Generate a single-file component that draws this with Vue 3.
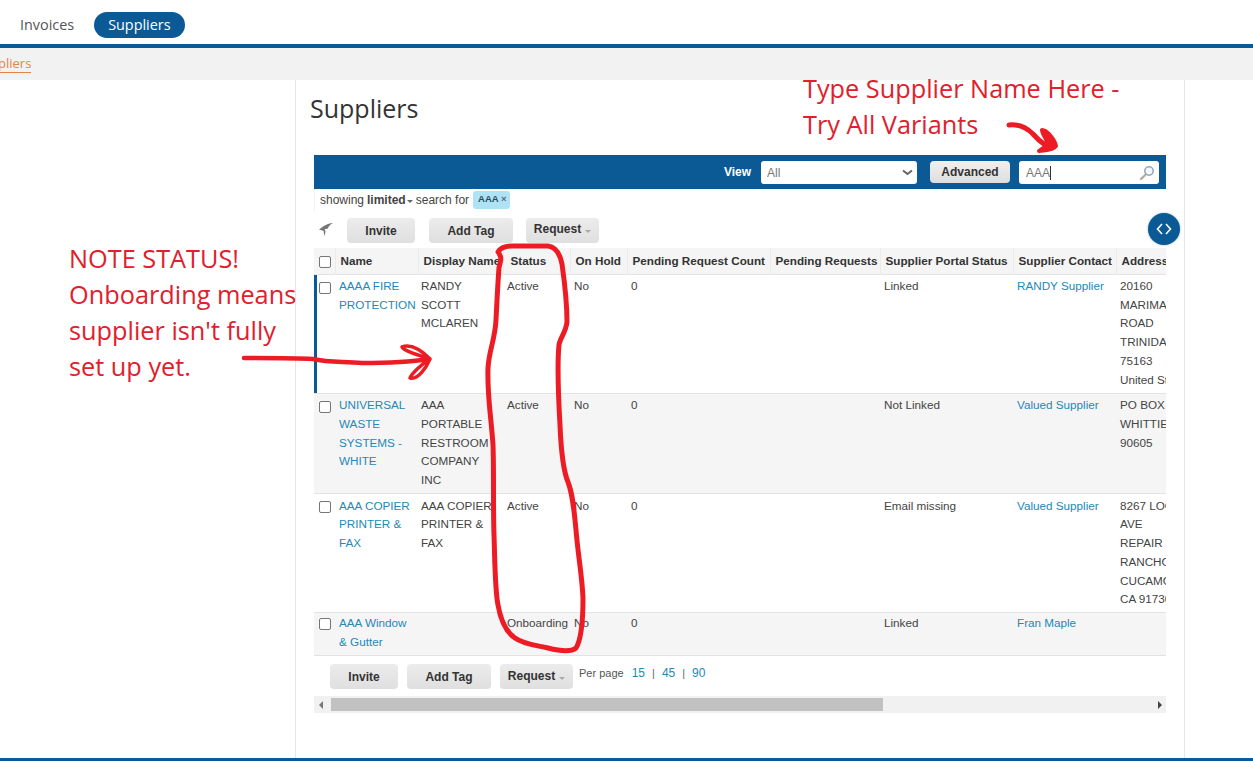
<script setup>
const columns = [
  { label: 'Name', w: 83 },
  { label: 'Display Name', w: 85 },
  { label: 'Status', w: 67 },
  { label: 'On Hold', w: 57 },
  { label: 'Pending Request Count', w: 143 },
  { label: 'Pending Requests', w: 110 },
  { label: 'Supplier Portal Status', w: 133 },
  { label: 'Supplier Contact', w: 103 },
  { label: 'Address', w: 120 }
]
const rows = [
  { name: 'AAAA FIRE\nPROTECTION', display: 'RANDY\nSCOTT\nMCLAREN', status: 'Active', portal: 'Linked', contact: 'RANDY Supplier', address: '20160\nMARIMAR\nROAD\nTRINIDAD\n75163\nUnited States', active: true },
  { name: 'UNIVERSAL\nWASTE\nSYSTEMS -\nWHITE', display: 'AAA\nPORTABLE\nRESTROOM\nCOMPANY\nINC', status: 'Active', portal: 'Not Linked', contact: 'Valued Supplier', address: 'PO BOX 1\nWHITTIER\n90605' },
  { name: 'AAA COPIER\nPRINTER &\nFAX', display: 'AAA COPIER\nPRINTER &\nFAX', status: 'Active', portal: 'Email missing', contact: 'Valued Supplier', address: '8267 LOOP\nAVE\nREPAIR\nRANCHO\nCUCAMONGA\nCA 91730' },
  { name: 'AAA Window\n& Gutter', display: '', status: 'Onboarding', portal: 'Linked', contact: 'Fran Maple', address: '' }
]
</script>

<template>
  <div class="page">
    <nav class="tabs">
      <a class="tab">Invoices</a>
      <a class="tab current">Suppliers</a>
    </nav>
    <div class="crumbs"><a class="crumb">Suppliers</a></div>

    <main class="column">
      <h1 class="title">Suppliers</h1>

      <div class="toolbar">
        <b class="view-label">View</b>
        <div class="select">
          <span>All</span>
          <svg width="11" height="7" viewBox="0 0 11 7"><path d="M1 1.500 5.500 5 10 1.500" fill="none" stroke="#666" stroke-width="2"/></svg>
        </div>
        <button class="advanced">Advanced</button>
        <div class="search">
          <span class="typed">AAA</span>
          <svg width="16" height="16" viewBox="0 0 16 16"><circle cx="10" cy="6" r="4.200" fill="#f4f8fb" stroke="#8da6bb" stroke-width="1.500"/><path d="M7 9.200 2 14" stroke="#b3ab97" stroke-width="2.200" stroke-linecap="round"/></svg>
        </div>
      </div>

      <div class="filters">
        <span>showing</span>
        <b>limited</b><i class="caret"></i>
        <span>search for</span>
        <span class="chip">AAA <em>×</em></span>
      </div>

      <div class="actions">
        <svg class="share" width="14" height="13" viewBox="0 0 14 13"><path d="M14 0C11 1.500 9.500 3.500 8.800 5.500L5.500 6.200 6.500 8C6.200 9.500 6 11 6 13 5 11.500 4.500 9.500 4.800 8L0 6.500 4.800 3C7 1.500 11 .2 14 0Z" fill="#757575"/></svg>
        <button class="btn invite">Invite</button>
        <button class="btn tag">Add Tag</button>
        <button class="btn request">Request<i class="caret light"></i></button>
      </div>

      <div class="grid-wrap">
        <table class="grid">
          <colgroup>
            <col class="check-col" />
            <col v-for="c in columns" :key="c.label" :style="{ width: c.w + 'px' }" />
          </colgroup>
          <thead>
            <tr>
              <th class="check"><input type="checkbox" /></th>
              <th v-for="c in columns" :key="c.label">{{ c.label }}</th>
            </tr>
          </thead>
          <tbody>
            <tr v-for="r in rows" :key="r.name" :class="{ active: r.active }">
              <td class="check"><input type="checkbox" /></td>
              <td><a class="link">{{ r.name }}</a></td>
              <td>{{ r.display }}</td>
              <td>{{ r.status }}</td>
              <td>No</td>
              <td>0</td>
              <td></td>
              <td>{{ r.portal }}</td>
              <td><a class="link">{{ r.contact }}</a></td>
              <td>{{ r.address }}</td>
            </tr>
          </tbody>
        </table>
      </div>

      <div class="actions bottom">
        <button class="btn invite">Invite</button>
        <button class="btn tag">Add Tag</button>
        <button class="btn request">Request<i class="caret light"></i></button>
        <div class="per-page">
          <span>Per page</span>
          <a class="link">15</a><span class="sep">|</span><a class="link">45</a><span class="sep">|</span><a class="link">90</a>
        </div>
      </div>

      <div class="scrollbar">
        <i class="arrow left"></i>
        <div class="track"><div class="thumb"></div></div>
        <i class="arrow right"></i>
      </div>
    </main>

    <footer class="foot"></footer>

    <button class="float" aria-label="Toggle width">
      <svg width="16" height="12" viewBox="0 0 16 12"><path d="M6 1 1.500 6 6 11M10 1l4.500 5L10 11" fill="none" stroke="#fff" stroke-width="1.600"/></svg>
    </button>

    <div class="note note-top">Type Supplier Name Here -<br />Try All Variants</div>
    <div class="note note-left">NOTE STATUS!<br />Onboarding means<br />supplier isn't fully<br />set up yet.</div>

    <svg class="ink" width="1253" height="770" viewBox="0 0 1253 770">
      <g fill="none" stroke="#ed1c24" stroke-linecap="round" stroke-linejoin="round">
        <path stroke-width="5" d="M498 252C501 247 506 246 512 246L548 246C556 247 560 254 562 264C565 285 567 305 567 322C566 332 560 338 559 345C557 365 558 390 560 425C561 450 563 470 568 482C573 495 574 510 576 530C578 555 582 575 583 598C583 620 581 640 576 648C571 652 560 651 548 648C535 645 523 644 515 638C506 632 501 622 498 605C495 590 495 565 494 535C493 505 494 470 493 445C491 415 487 395 488 368C489 350 495 340 496 320C497 300 498 280 499 268C500 262 503 258 498 252Z"/>
        <path stroke-width="4.500" d="M244 358C270 358 295 358 313 359C330 363 345 361 362 363C385 363 410 362 429 359"/>
        <path stroke-width="3.500" d="M430 359C420 349 410 344 402 347C404 351 418 355 430 359C422 364 412 373 410 378C418 380 426 368 430 359Z"/>
        <path stroke-width="5" d="M1009 125C1018 124 1026 127 1033 134C1040 142 1047 147 1053 147"/>
        <path stroke-width="4" fill="#ed1c24" d="M1042 130C1047 130 1055 140 1056 146C1052 151 1045 150 1039 151C1044 147 1048 146 1047 142C1046 138 1042 134 1042 130Z"/>
      </g>
    </svg>
  </div>
</template>

<style scoped>
.page {
  position: relative;
  width: 1253px;
  height: 770px;
  overflow: hidden;
  background: #fff;
  font-family: "Liberation Sans", Arial, sans-serif;
  font-size: 12px;
  color: #333;
}
.tabs {
  height: 44px;
  box-sizing: border-box;
  display: flex;
  align-items: flex-start;
  padding: 12px 0 0 6px;
  gap: 6px;
  font-family: "Open Sans", sans-serif;
  font-size: 14.400px;
}
.tab {
  height: 26px;
  line-height: 26px;
  padding: 0 14px;
  border-radius: 13px;
  color: #555;
}
.tab.current {
  background: #0b5a96;
  color: #fff;
}
.crumbs {
  box-sizing: border-box;
  border-top: 4px solid #0b5a96;
  height: 36px;
  background: #f2f2f2;
  overflow: hidden;
  font-family: "Open Sans", sans-serif;
  font-size: 13px;
  padding-top: 6px;
}
.crumb {
  display: inline-block;
  margin-left: -25px;
  color: #e5824a;
  line-height: 18px;
  border-bottom: 1px solid #e5824a;
}
.column {
  margin-left: 295px;
  width: 890px;
  height: 678px;
  box-sizing: border-box;
  border-left: 1px solid #e6e6e6;
  border-right: 1px solid #e6e6e6;
  padding: 13px 0 0 18px;
}
.title {
  margin: 0 0 32px -4px;
  font-family: "Open Sans", sans-serif;
  font-size: 25px;
  line-height: 30px;
  font-weight: 400;
  color: #333;
}
.toolbar {
  width: 852px;
  height: 34px;
  background: #0b5a96;
  display: flex;
  align-items: center;
  box-sizing: border-box;
  padding-left: 410px;
}
.view-label {
  color: #fff;
  font-size: 12px;
  width: 37px;
}
.select {
  width: 156px;
  height: 23px;
  box-sizing: border-box;
  background: #fff;
  border-radius: 3px;
  display: flex;
  align-items: center;
  justify-content: space-between;
  padding: 1px 2px 0 6px;
  color: #777;
  margin-right: 13px;
}
.select svg { margin-right: 2px; }
.advanced {
  width: 80px;
  height: 22px;
  border: 0;
  padding: 0;
  border-radius: 4px;
  background: linear-gradient(#f0f0f0, #dedede);
  font: bold 12px "Liberation Sans", Arial, sans-serif;
  color: #333;
  margin-right: 9px;
}
.search {
  width: 140px;
  height: 23px;
  box-sizing: border-box;
  background: #fff;
  border-radius: 3px;
  display: flex;
  align-items: center;
  justify-content: space-between;
  padding: 1px 4px 0 7px;
  color: #777;
}
.typed { border-right: 1px solid #333; line-height: 14px; }
.filters {
  height: 22px;
  display: flex;
  align-items: center;
  padding: 0 0 0 5px;
  gap: 3px;
  color: #444;
  border-left: 1px solid #f2f2f2;
  box-sizing: border-box;
}
.caret {
  display: inline-block;
  width: 0;
  height: 0;
  border: 3px solid transparent;
  border-top-color: #666;
  border-bottom: 0;
  margin: 2px 0 0 -2px;
}
.caret.light {
  border-top-color: #aaa;
  margin-left: 4px;
}
.chip {
  margin-left: 1px;
  height: 18px;
  line-height: 16px;
  padding: 0 3px 0 5px;
  border-radius: 3px;
  background: #aee2f5;
  font-size: 9.500px;
  font-weight: 700;
  color: #2c4a5c;
}
.chip em { font-style: normal; color: #667; }
.actions {
  display: flex;
  align-items: center;
  height: 25px;
  margin-top: 7px;
}
.share { margin: 0 14px 2px 5px; flex: none; }
.btn {
  height: 25px;
  border: 0;
  padding: 1px 0 0;
  border-radius: 4px;
  background: linear-gradient(#ececec, #dfdfdf);
  font: bold 12px "Liberation Sans", Arial, sans-serif;
  color: #333;
}
.invite { width: 68px; }
.tag { width: 84px; margin-left: 14px; }
.request { width: 73px; margin-left: 13px; padding: 0 0 3px; }
.grid-wrap {
  width: 852px;
  margin-top: 5px;
  overflow: hidden;
  border-bottom: 1px solid #e3e3e3;
}
.grid {
  table-layout: fixed;
  width: 922px;
  border-collapse: collapse;
  line-height: 18.700px;
  font-size: 11.700px;
}
.check-col { width: 21px; }
.grid th {
  height: 26px;
  padding: 2px 0 0 5px;
  box-sizing: border-box;
  text-align: left;
  background: #f5f5f5;
  border-left: 1px solid #ebebeb;
  font-weight: 700;
  white-space: nowrap;
  overflow: hidden;
  color: #333;
}
.grid th.check { border-left: 0; }
.grid th:nth-child(4) { padding-left: 7px; }
.grid td {
  vertical-align: top;
  padding: 2.500px 0 3.500px 4px;
  white-space: pre;
  color: #444;
  border-top: 1px solid #e3e3e3;
}
.grid td:nth-child(3) { padding-left: 3px; }
.grid tbody tr:last-child td { padding-top: 1px; padding-bottom: 3px; }
.grid tbody tr:nth-child(even) td { background: #f5f5f5; }
.grid td.check { padding: 3px 0 0 5px; }
.grid th.check { padding: 3px 0 0 5px; }
.grid input {
  appearance: none;
  display: block;
  width: 12px;
  height: 12px;
  margin: 0;
  box-sizing: border-box;
  background: #fff;
  border: 1px solid #767676;
  border-radius: 2px;
}
.grid td.check input { margin-top: 4px; }
.grid tr.active td.check { box-shadow: inset 3px 0 0 #0b5a96; }
.link { color: #2389b5; }
.bottom {
  margin-top: 8px;
  padding-left: 16px;
}
.bottom .tag { margin-left: 9px; }
.bottom .request { margin-left: 9px; padding: 0; }
.per-page {
  align-self: flex-start;
  margin: 2px 0 0 6px;
  font-size: 11px;
  line-height: 14px;
  color: #555;
  display: flex;
}
.per-page .link { font-size: 12px; }
.per-page span:first-child { margin-right: 8px; }
.sep { margin: 0 7px; color: #666; }
.scrollbar {
  width: 852px;
  height: 17px;
  margin-top: 7px;
  background: #f1f1f1;
  display: flex;
  align-items: center;
}
.track { flex: 1; height: 13px; }
.thumb {
  width: 552px;
  height: 13px;
  background: #c1c1c1;
}
.arrow {
  flex: none;
  width: 17px;
  height: 17px;
  position: relative;
}
.arrow::after {
  content: "";
  position: absolute;
  top: 5px;
  border: 4px solid transparent;
}
.arrow.left::after { left: 1px; border-right-color: #777; }
.arrow.right::after { left: 9px; border-left-color: #444; }
.foot {
  height: 3px;
  background: #0b5a96;
}
.float {
  position: absolute;
  left: 1148px;
  top: 213px;
  width: 32px;
  height: 32px;
  padding: 0;
  border: 0;
  border-radius: 50%;
  background: #0b5a96;
  box-shadow: 0 0 2px rgba(11, 90, 150, .5);
  display: flex;
  align-items: center;
  justify-content: center;
}
.note {
  position: absolute;
  font-family: "Open Sans", sans-serif;
  font-size: 25.300px;
  line-height: 36px;
  color: #e0202c;
  white-space: nowrap;
}
.note-top { left: 803px; top: 70px; }
.note-left { left: 69px; top: 240px; }
.ink {
  position: absolute;
  left: 0;
  top: 0;
  pointer-events: none;
}
</style>
